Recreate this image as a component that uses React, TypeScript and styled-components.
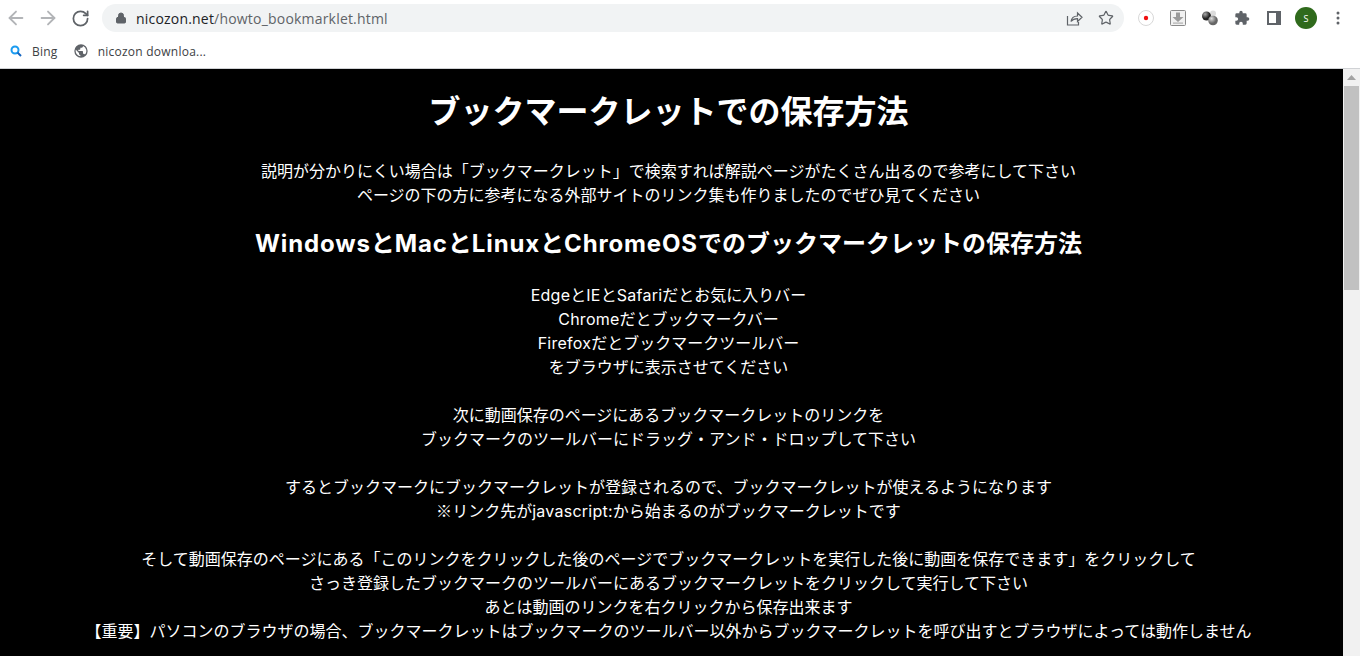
import React from "react";
import styled, { createGlobalStyle } from "styled-components";
import { ArrowLeft, ArrowRight, RotateCw, Lock, Star } from "lucide-react";

const Global = createGlobalStyle`
  html, body { margin: 0; padding: 0; height: 100%; overflow: hidden; background: #000; }
  #root { height: 100%; }
`;
const Page = styled.div`
  width: 1360px; height: 656px; display: flex; flex-direction: column; overflow: hidden;
  font-family: Inter, "Noto Sans CJK JP", sans-serif;
`;
const Toolbar = styled.div`
  height: 36px; flex: none; background: #fff; display: flex; align-items: center;
`;
const NavButton = styled.button<{ $dim?: boolean }>`
  width: 32px; height: 32px; flex: none; padding: 0; border: 0; background: none; display: flex; align-items: center; justify-content: center;
  color: ${p => (p.$dim ? "#b2b4b7" : "#5f6368")};
`;
const Omnibox = styled.div`
  margin-left: 6px; width: 1022px; height: 28px; border-radius: 14px; background: #f1f3f4; display: flex; align-items: center; padding: 0 2px 0 13px; box-sizing: border-box; flex: none;
`;
const UrlText = styled.div`
  margin-left: 9px; flex: 1; font: 14px "Open Sans", "Noto Sans", sans-serif; color: #5f6368; letter-spacing: 0.014em;
  b { font-weight: 400; color: #202124; }
`;
const OmniIcon = styled.span`
  width: 32px; height: 24px; display: flex; align-items: center; justify-content: center; color: #5f6368;
`;
const Extensions = styled.div`
  display: flex; align-items: center; margin-left: 6px; flex: none;
`;
const ExtSlot = styled.div`
  width: 32px; height: 32px; display: flex; align-items: center; justify-content: center;
`;
const Avatar = styled.div`
  width: 22px; height: 22px; border-radius: 50%; background: #2f6a1c; color: #fff; font: 9px "Open Sans", sans-serif; display: flex; align-items: center; justify-content: center;
`;
const Bookmarks = styled.div`
  height: 33px; flex: none; background: #fff; border-bottom: 1px solid #d0d2d5; box-sizing: border-box; display: flex; align-items: center; padding: 0 0 2px 9px;
`;
const Bookmark = styled.div`
  display: flex; align-items: center; gap: 9px; margin-right: 15px; font: 12px "Open Sans", sans-serif; color: #3c4043; letter-spacing: 0.02em;
`;
const Body = styled.div`
  flex: 1; min-height: 0; display: flex; background: #000;
`;
const Content = styled.main`
  flex: 1; min-width: 0; color: #fff; text-align: center; overflow: hidden; padding-top: 21px; padding-right: 6px; box-sizing: border-box;
`;
const Title = styled.h1`
  margin: 0; font-size: 32px; line-height: 44px; font-weight: 700;
`;
const Latin = styled.span`
  letter-spacing: 0.016em;
`;
const Mark = styled.span`
  font-family: "Noto Sans CJK JP", sans-serif;
  line-height: 0;
`;
const Para = styled.p`
  margin: 0 0 24px; font-size: 16px; line-height: 24px; white-space: nowrap;
`;
const Lead = styled(Para)`
  margin: 25px 0 0;
`;
const Subtitle = styled.h2`
  margin: 19px 0 21px; font-size: 24px; line-height: 36px; font-weight: 700;
  ${Latin} { letter-spacing: 0.036em; }
`;
const Scrollbar = styled.div`
  width: 17px; flex: none; background: #f1f1f1; display: flex; flex-direction: column; align-items: center;
`;
const ScrollArrow = styled.div`
  height: 17px; flex: none; display: flex; align-items: center; justify-content: center;
`;
const ScrollThumb = styled.div`
  width: 15px; height: 204px; background: #c1c1c1;
`;

const paragraphs = [
  ["EdgeとIEとSafariだとお気に入りバー", "Chromeだとブックマークバー", "Firefoxだとブックマークツールバー", "をブラウザに表示させてください"],
  ["次に動画保存のページにあるブックマークレットのリンクを", "ブックマークのツールバーにドラッグ・アンド・ドロップして下さい"],
  ["するとブックマークにブックマークレットが登録されるので、ブックマークレットが使えるようになります", "※リンク先がjavascript:から始まるのがブックマークレットです"],
  ["そして動画保存のページにある「このリンクをクリックした後のページでブックマークレットを実行した後に動画を保存できます」をクリックして", "さっき登録したブックマークのツールバーにあるブックマークレットをクリックして実行して下さい", "あとは動画のリンクを右クリックから保存出来ます", "【重要】パソコンのブラウザの場合、ブックマークレットはブックマークのツールバー以外からブックマークレットを呼び出すとブラウザによっては動作しません"],
];

const Mixed = ({ text }: { text: string }) => (
  <>
    {text.split(/([A-Za-z:]+|※)/).map((part, i) =>
      part === "※" ? <Mark key={i}>{part}</Mark> : i % 2 === 1 ? <Latin key={i}>{part}</Latin> : part
    )}
  </>
);

const Lines = ({ lines }: { lines: string[] }) => (
  <>{lines.map((l, i) => <React.Fragment key={i}>{i > 0 && <br />}<Mixed text={l} /></React.Fragment>)}</>
);

export default function App() {
  return (
    <Page>
      <Global />
      <Toolbar>
        <NavButton $dim><ArrowLeft size={22} strokeWidth={2} /></NavButton>
        <NavButton $dim><ArrowRight size={22} strokeWidth={2} /></NavButton>
        <NavButton><RotateCw size={19} strokeWidth={2.2} /></NavButton>
        <Omnibox>
          <Lock size={12} color="#5f6368" fill="#5f6368" />
          <UrlText><b>nicozon.net</b>/howto_bookmarklet.html</UrlText>
          <OmniIcon>
            <svg width="17" height="17" viewBox="0 0 17 17" fill="none" stroke="#5f6368" strokeWidth="1.2">
              <path d="M1.5 6v9h11v-3" />
              <path d="M5 11.5c.5-3.5 3-5.5 6.500-5.500V3l4.500 4.300-4.500 4.200V8.700c-3 0-5 .8-6.500 2.800z" />
            </svg>
          </OmniIcon>
          <OmniIcon><Star size={16} strokeWidth={1.8} /></OmniIcon>
        </Omnibox>
        <Extensions>
          <ExtSlot>
            <svg width="16" height="16" viewBox="0 0 16 16">
              <circle cx="8" cy="8" r="7.500" fill="#fff" stroke="#d8d8d8" />
              <circle cx="8" cy="8" r="2.200" fill="#f01010" />
            </svg>
          </ExtSlot>
          <ExtSlot>
            <svg width="16" height="16" viewBox="0 0 16 16">
              <rect x="0.500" y="0.500" width="15" height="15" rx="1" fill="#f1f1f1" stroke="#8a8a8a" />
              <path d="M6 2.500h4V7h3.500L8 12 2.500 7H6z" fill="#9a9a9a" />
              <rect x="3" y="12.500" width="10" height="1.200" fill="#b0b0b0" />
            </svg>
          </ExtSlot>
          <ExtSlot>
            <svg width="18" height="16" viewBox="0 0 18 16">
              <defs>
                <radialGradient id="b1" cx="35%" cy="30%"><stop offset="0" stopColor="#aaa" /><stop offset="1" stopColor="#222" /></radialGradient>
                <radialGradient id="b2" cx="35%" cy="30%"><stop offset="0" stopColor="#ddd" /><stop offset="1" stopColor="#666" /></radialGradient>
              </defs>
              <circle cx="12" cy="3.500" r="3" fill="#dcdcdc" />
              <circle cx="5.500" cy="6" r="4.500" fill="url(#b1)" />
              <circle cx="12" cy="10.500" r="4.800" fill="url(#b2)" />
            </svg>
          </ExtSlot>
          <ExtSlot>
            <svg width="16" height="16" viewBox="0 0 24 24" fill="#5f6368">
              <path d="M20.500 11H19V7a2 2 0 0 0-2-2h-4V3.500a2.500 2.500 0 0 0-5 0V5H4a2 2 0 0 0-2 2v3.800h1.500a2.700 2.700 0 0 1 0 5.400H2V20a2 2 0 0 0 2 2h3.800v-1.500a2.700 2.700 0 0 1 5.400 0V22H17a2 2 0 0 0 2-2v-4h1.500a2.500 2.500 0 0 0 0-5z" />
            </svg>
          </ExtSlot>
          <ExtSlot>
            <svg width="14" height="14" viewBox="0 0 14 14">
              <rect x="1" y="1" width="12" height="12" fill="#fff" stroke="#5f6368" strokeWidth="2" />
              <rect x="9" y="1" width="4" height="12" fill="#5f6368" />
            </svg>
          </ExtSlot>
          <ExtSlot><Avatar>S</Avatar></ExtSlot>
          <ExtSlot>
            <svg width="4" height="14" viewBox="0 0 4 14" fill="#5f6368">
              <circle cx="2" cy="2" r="1.500" /><circle cx="2" cy="7" r="1.500" /><circle cx="2" cy="12" r="1.500" />
            </svg>
          </ExtSlot>
        </Extensions>
      </Toolbar>
      <Bookmarks>
        <Bookmark>
          <svg width="14" height="14" viewBox="0 0 14 14" fill="none">
            <circle cx="6" cy="6" r="3.500" stroke="#1a9bf0" strokeWidth="2" />
            <path d="M8.500 8.500 12 12" stroke="#1565c0" strokeWidth="2" />
          </svg>
          Bing
        </Bookmark>
        <Bookmark>
          <svg width="16" height="16" viewBox="0 0 24 24" fill="#5f6368">
            <path d="M12 2a10 10 0 1 0 0 20 10 10 0 0 0 0-20zm-1 17.900A8 8 0 0 1 4.200 10.200L9 15v1a2 2 0 0 0 2 2zm6.900-2.500A2 2 0 0 0 16 16h-1v-3a1 1 0 0 0-1-1H8v-2h2a1 1 0 0 0 1-1V7h2a2 2 0 0 0 2-2v-.4a8 8 0 0 1 2.900 12.800z" />
          </svg>
          nicozon downloa...
        </Bookmark>
      </Bookmarks>
      <Body>
        <Content>
          <Title>ブックマークレットでの保存方法</Title>
          <Lead><Lines lines={["説明が分かりにくい場合は「ブックマークレット」で検索すれば解説ページがたくさん出るので参考にして下さい", "ページの下の方に参考になる外部サイトのリンク集も作りましたのでぜひ見てください"]} /></Lead>
          <Subtitle><Mixed text="WindowsとMacとLinuxとChromeOSでのブックマークレットの保存方法" /></Subtitle>
          {paragraphs.map((p, i) => <Para key={i}><Lines lines={p} /></Para>)}
        </Content>
        <Scrollbar>
          <ScrollArrow>
            <svg width="9" height="5" viewBox="0 0 9 5"><path d="M4.500 0 9 5H0z" fill="#a3a3a3" /></svg>
          </ScrollArrow>
          <ScrollThumb />
        </Scrollbar>
      </Body>
    </Page>
  );
}
